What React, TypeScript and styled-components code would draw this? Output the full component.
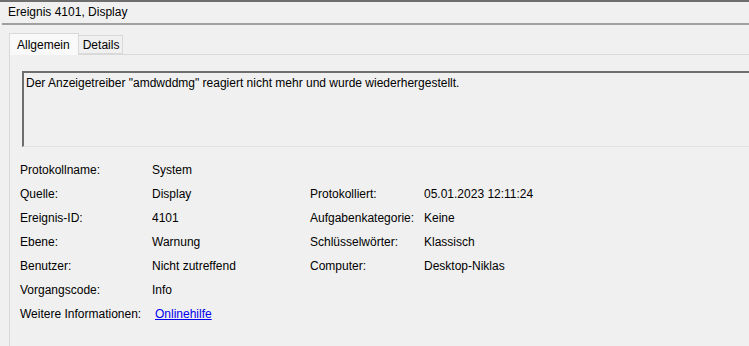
import styled, { createGlobalStyle } from "styled-components"

const GlobalStyle = createGlobalStyle`
  html, body {
    margin: 0;
    padding: 0;
    background: #f0f0f0;
  }
  body {
    font-family: "Liberation Sans", Arial, sans-serif;
    font-size: 12px;
    color: #000;
  }
`

const leftRows = [
  ["Protokollname:", "System"],
  ["Quelle:", "Display"],
  ["Ereignis-ID:", "4101"],
  ["Ebene:", "Warnung"],
  ["Benutzer:", "Nicht zutreffend"],
  ["Vorgangscode:", "Info"],
]

const rightRows: (string[] | null)[] = [
  null,
  ["Protokolliert:", "05.01.2023 12:11:24"],
  ["Aufgabenkategorie:", "Keine"],
  ["Schlüsselwörter:", "Klassisch"],
  ["Computer:", "Desktop-Niklas"],
  null,
]

export default function App() {
  return (
    <Window>
      <GlobalStyle />
      <TitleBar>Ereignis 4101, Display</TitleBar>
      <TabArea>
        <TabStrip>
          <Tab $active>Allgemein</Tab>
          <Tab>Details</Tab>
        </TabStrip>
        <TabPanel>
          <MessageBox>
            Der Anzeigetreiber "amdwddmg" reagiert nicht mehr und wurde wiederhergestellt.
          </MessageBox>
          <InfoGrid>
            {leftRows.map(([label, value], i) => (
              <InfoRow key={label}>
                <Label>{label}</Label>
                <Value>{value}</Value>
                <Label>{rightRows[i]?.[0]}</Label>
                <Value>{rightRows[i]?.[1]}</Value>
              </InfoRow>
            ))}
            <InfoRow>
              <Label>Weitere Informationen:</Label>
              <Link href="#">Onlinehilfe</Link>
            </InfoRow>
          </InfoGrid>
        </TabPanel>
      </TabArea>
    </Window>
  )
}

const Window = styled.div`
  width: 749px;
  height: 346px;
  overflow: hidden;
  background: #f0f0f0;
  border-top: 2px solid #6e6e6e;
  box-sizing: border-box;
`

const TitleBar = styled.div`
  height: 21px;
  line-height: 20px;
  padding-left: 6px;
  margin-left: 2px;
  border-bottom: 2px solid #a0a0a0;
`

const TabArea = styled.div`
  padding: 8px 0 0 9px;
`

const TabStrip = styled.div`
  display: flex;
  align-items: flex-end;
  height: 21px;
`

const Tab = styled.div<{ $active?: boolean }>`
  box-sizing: border-box;
  height: ${(p) => (p.$active ? "22px" : "19px")};
  margin-bottom: ${(p) => (p.$active ? "-1px" : "0")};
  margin-right: ${(p) => (p.$active ? "-1px" : "0")};
  padding: ${(p) => (p.$active ? "4px 8px 0 7px" : "2px 3px 0 4px")};
  background: ${(p) => (p.$active ? "#f9f9f9" : "#f0f0f0")};
  border: 1px solid #d9d9d9;
  border-bottom: ${(p) => (p.$active ? "none" : "1px solid #d9d9d9")};
  position: relative;
  z-index: ${(p) => (p.$active ? 1 : 0)};
`

const TabPanel = styled.div`
  border-top: 1px solid #d9d9d9;
  border-left: 1px solid #d9d9d9;
  background: #f0f0f0;
  height: 300px;
  padding: 16px 0 0 12px;
`

const MessageBox = styled.div`
  box-sizing: border-box;
  height: 76px;
  margin-right: -20px;
  border-top: 2px solid #6e6e6e;
  border-left: 2px solid #6e6e6e;
  border-bottom: 1px solid #e3e3e3;
  padding: 3px 0 0 2px;
`

const InfoGrid = styled.div`
  display: flex;
  flex-direction: column;
  padding-top: 11px;
  margin-left: -2px;
`

const InfoRow = styled.div`
  display: grid;
  grid-template-columns: 132px 158px 114px auto;
  height: 24px;
  align-items: center;
  white-space: nowrap;
`

const Label = styled.span``

const Value = styled.span``

const Link = styled.a`
  color: #0000ee;
  text-decoration: underline;
  padding-left: 3px;
`
